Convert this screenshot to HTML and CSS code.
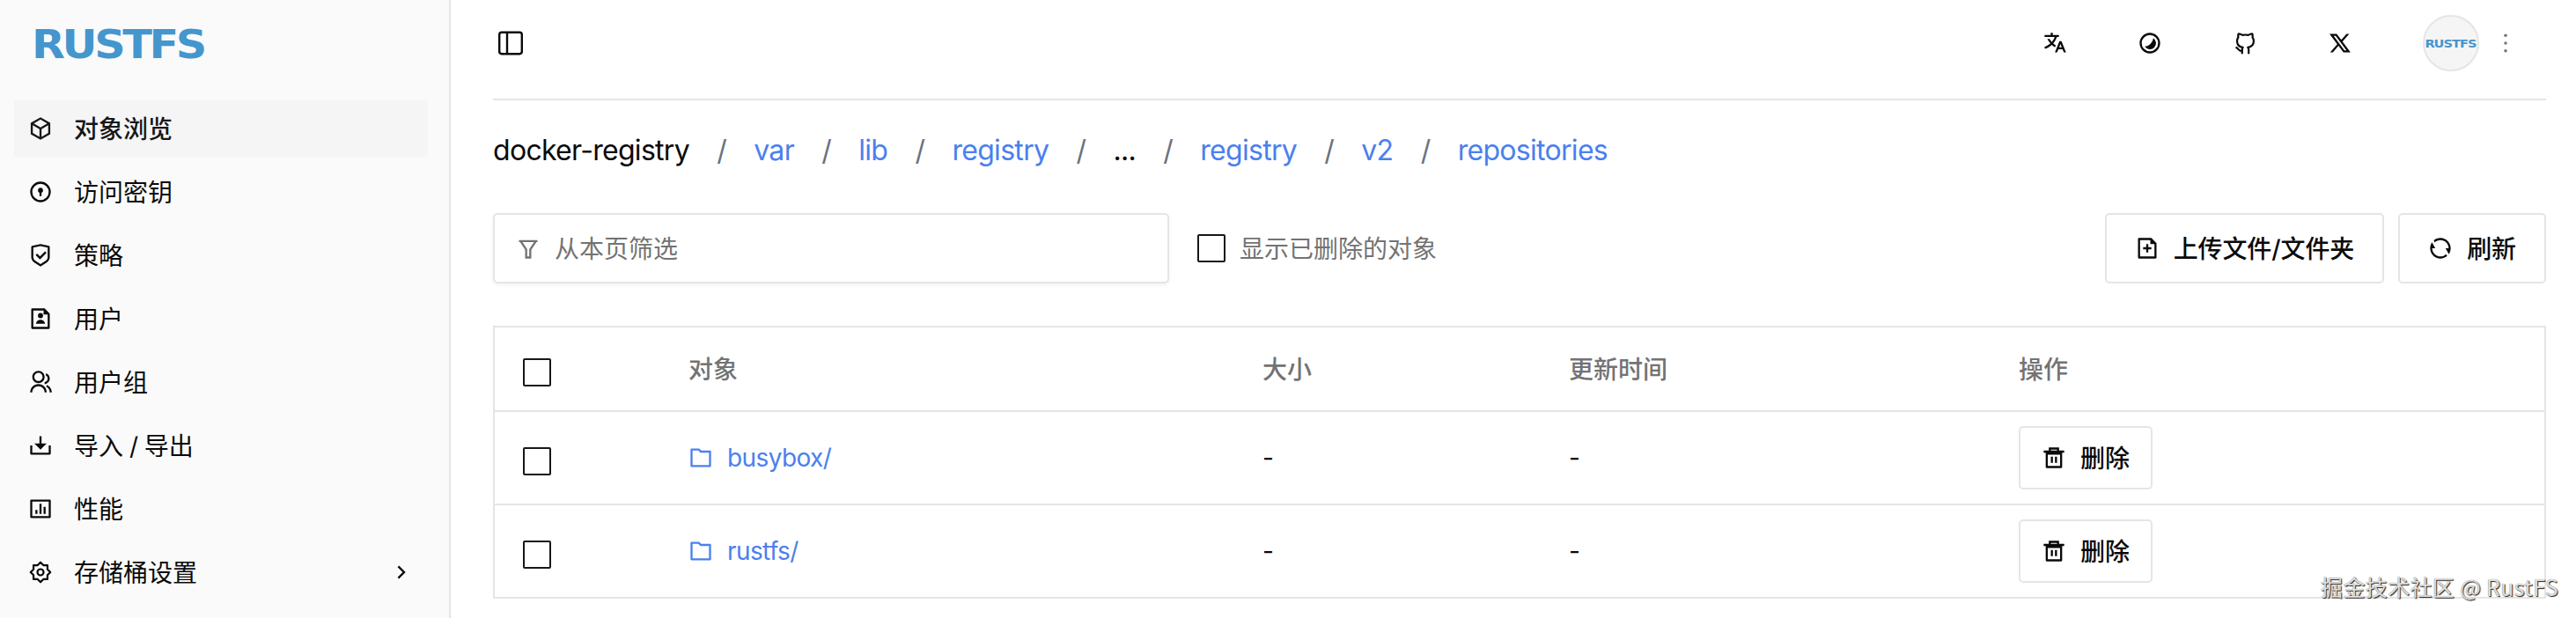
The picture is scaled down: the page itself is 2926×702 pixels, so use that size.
FILE: index.html
```html
<!DOCTYPE html>
<html lang="zh-CN">
<head>
<meta charset="utf-8">
<title>RustFS</title>
<link rel="stylesheet" href="styles.css">
</head>
<body>
<svg class="sprite" aria-hidden="true">
  <symbol id="box" viewBox="0 0 24 24"><path d="M12 1L21.5 6.5V17.5L12 23L2.5 17.5V6.5L12 1ZM5.494 7.078L12 10.844L18.506 7.078L12 3.311L5.494 7.078ZM4.5 8.813V16.347L11 20.11V12.577L4.5 8.813ZM13 20.11L19.5 16.347V8.813L13 12.577V20.11Z"/></symbol>
  <symbol id="lock" viewBox="0 0 24 24"><path d="M12 2a10 10 0 1 1 0 20a10 10 0 1 1 0-20ZM12 4a8 8 0 1 0 0 16a8 8 0 1 0 0-16ZM12 8a2.5 2.5 0 0 1 1 4.8V16H11V12.8A2.5 2.5 0 0 1 12 8Z"/></symbol>
  <symbol id="shield" viewBox="0 0 24 24"><path d="M3.783 2.826L12 1L20.217 2.826C20.674 2.928 21 3.333 21 3.802V13.789C21 15.795 19.997 17.668 18.328 18.781L12 23L5.672 18.781C4.002 17.668 3 15.795 3 13.789V3.802C3 3.333 3.326 2.928 3.783 2.826ZM5 4.604V13.789C5 15.126 5.668 16.375 6.781 17.117L12 20.597L17.219 17.117C18.332 16.375 19 15.126 19 13.789V4.604L12 3.049L5 4.604ZM16.452 8.222L17.866 9.636L11.503 16L7.26 11.757L8.674 10.343L11.502 13.171Z"/></symbol>
  <symbol id="user" viewBox="0 0 24 24"><path d="M15 4H5V20H19V8H15V4ZM3 2.992C3 2.444 3.447 2 3.999 2H16L21 7V20.993C21 21.549 20.555 22 20.007 22H3.993C3.445 22 3 21.545 3 21.008V2.992ZM12 11.5A2.5 2.5 0 1 1 12 6.5A2.5 2.5 0 1 1 12 11.5ZM7.527 17C7.776 14.75 9.684 13 12 13C14.316 13 16.224 14.75 16.473 17H7.527Z"/></symbol>
  <symbol id="group" viewBox="0 0 24 24"><path d="M2 22C2 17.582 5.582 14 10 14C14.418 14 18 17.582 18 22H16C16 18.686 13.314 16 10 16C6.686 16 4 18.686 4 22H2ZM10 13C6.685 13 4 10.315 4 7C4 3.685 6.685 1 10 1C13.315 1 16 3.685 16 7C16 10.315 13.315 13 10 13ZM10 11C12.21 11 14 9.21 14 7C14 4.79 12.21 3 10 3C7.79 3 6 4.79 6 7C6 9.21 7.79 11 10 11ZM18.284 14.703C21.064 15.956 23 18.752 23 22H21C21 19.564 19.548 17.467 17.463 16.527L18.284 14.703ZM17.596 3.413C19.594 4.237 21 6.204 21 8.5C21 11.37 18.804 13.725 16 13.978V11.965C17.697 11.722 19 10.264 19 8.5C19 7.119 18.202 5.926 17.041 5.356L17.596 3.413Z"/></symbol>
  <symbol id="transfer" viewBox="0 0 24 24"><path d="M13 10H18L12 16L6 10H11V3H13V10ZM4 19H20V12H22V20C22 20.552 21.552 21 21 21H3C2.448 21 2 20.552 2 20V12H4V19Z"/></symbol>
  <symbol id="chart" viewBox="0 0 24 24"><path d="M3 3H21C21.552 3 22 3.448 22 4V20C22 20.552 21.552 21 21 21H3C2.448 21 2 20.552 2 20V4C2 3.448 2.448 3 3 3ZM4 5V19H20V5H4ZM7 13H9V17H7V13ZM11 7H13V17H11V7ZM15 10H17V17H15V10Z"/></symbol>
  <symbol id="gear" viewBox="0 0 24 24"><g fill="none" stroke="currentColor" stroke-width="1.9" stroke-linejoin="round"><path d="M5.2 5.2H9.2L12 2.4L14.8 5.2H18.8V9.2L21.6 12L18.8 14.8V18.8H14.8L12 21.6L9.2 18.8H5.2V14.8L2.4 12L5.2 9.2Z"/><circle cx="12" cy="12" r="3"/></g></symbol>
  <symbol id="chevron" viewBox="0 0 24 24"><path d="M13.172 12L8.222 7.05L9.636 5.636L16 12L9.636 18.364L8.222 16.95Z"/></symbol>
  <symbol id="panel" viewBox="0 0 32 32"><g fill="none" stroke="currentColor" stroke-width="2.4"><rect x="3.2" y="3.8" width="25.6" height="24.4" rx="2.6"/><path d="M12 4V28"/></g></symbol>
  <symbol id="translate" viewBox="0 0 24 24"><path d="M18.5 10L22.9 21H20.745L19.544 18H15.454L14.255 21H12.101L16.5 10H18.5ZM10 2V4H16V6H14.032C13.243 8.366 11.995 10.504 10.414 12.301C11.198 13.004 12.047 13.62 12.953 14.136L12.202 16.014C11.063 15.391 9.999 14.626 9.03 13.739C7.144 15.464 4.906 16.77 2.446 17.564L1.911 15.635C4.061 14.931 6.023 13.788 7.673 12.285C6.46 10.895 5.445 9.319 4.687 8H6.963C7.551 9.044 8.245 9.996 9.001 10.855C10.258 9.425 11.256 7.776 11.912 6H2V4H8V2H10ZM17.5 12.885L16.253 16H18.745L17.5 12.885Z"/></symbol>
  <symbol id="contrast" viewBox="0 0 24 24"><path d="M12 22C6.477 22 2 17.523 2 12C2 6.477 6.477 2 12 2C17.523 2 22 6.477 22 12C22 17.523 17.523 22 12 22ZM12 20A8 8 0 1 0 12 4A8 8 0 1 0 12 20ZM7 15.316C11.284 14.787 14.787 11.284 15.316 7A6 6 0 1 1 7 15.316Z"/></symbol>
  <symbol id="github" viewBox="0 0 24 24"><g fill="none" stroke="currentColor" stroke-width="1.9" stroke-linejoin="round"><path d="M9.2 22.5V18.7C9.2 17.5 9.5 16.8 10 16.2C7 15.7 4.3 14.3 4.3 9.8C4.3 8.5 4.7 7.4 5.5 6.5C5.2 5.4 5.3 4.1 5.8 2.8C7 2.8 8.2 3.3 9.6 4.2C11.2 3.8 13.6 3.8 15.2 4.2C16.6 3.3 17.8 2.8 19 2.8C19.5 4.1 19.6 5.4 19.3 6.5C20.1 7.4 20.5 8.5 20.5 9.8C20.5 14.3 17.8 15.7 14.8 16.2C15.3 16.8 15.6 17.5 15.6 18.7V22.5"/><path d="M9.4 19.6C5.6 20.4 5.7 16.4 3 16.2"/></g></symbol>
  <symbol id="xlogo" viewBox="0 0 24 24"><path d="M10.488 14.651L15.25 21H22.25L14.392 10.522L20.93 3H18.28L13.163 8.884L8.75 3H1.75L9.262 13.015L2.32 21H4.97L10.488 14.651ZM16.25 19L5.75 5H7.75L18.25 19H16.25Z"/></symbol>
  <symbol id="more" viewBox="0 0 24 24"><circle cx="12" cy="4.5" r="1.5"/><circle cx="12" cy="12" r="1.5"/><circle cx="12" cy="19.5" r="1.5"/></symbol>
  <symbol id="filter" viewBox="0 0 24 24"><path d="M21 4V6H20L15 13.5V22H9V13.5L4 6H3V4H21ZM6.404 6L11 12.894V20H13V12.894L17.596 6H6.404Z"/></symbol>
  <symbol id="fileadd" viewBox="0 0 24 24"><path d="M15 4H5V20H19V8H15V4ZM3 2.992C3 2.444 3.447 2 3.999 2H16L21 7V20.993C21 21.549 20.555 22 20.007 22H3.993C3.445 22 3 21.545 3 21.008V2.992ZM11 11V8H13V11H16V13H13V16H11V13H8V11H11Z"/></symbol>
  <symbol id="refresh" viewBox="0 0 24 24"><path d="M5.463 4.433C7.278 2.86 9.547 2 12 2C17.523 2 22 6.477 22 12C22 14.136 21.33 16.116 20.19 17.741L17 12H20C20 7.582 16.418 4 12 4C9.85 4 7.898 4.848 6.46 6.228L5.463 4.433ZM18.537 19.567C16.722 21.14 14.453 22 12 22C6.477 22 2 17.523 2 12C2 9.864 2.67 7.884 3.81 6.259L7 12H4C4 16.418 7.582 20 12 20C14.15 20 16.102 19.152 17.54 17.772L18.537 19.567Z"/></symbol>
  <symbol id="folder" viewBox="0 0 24 24"><path d="M4 5V19H20V7H11.586L9.586 5H4ZM12.414 5H21C21.552 5 22 5.448 22 6V20C22 20.552 21.552 21 21 21H3C2.448 21 2 20.552 2 20V4C2 3.448 2.448 3 3 3H10.414L12.414 5Z"/></symbol>
  <symbol id="trash" viewBox="0 0 24 24"><path d="M20 7V21C20 21.552 19.552 22 19 22H5C4.448 22 4 21.552 4 21V7H2V5H22V7H20ZM6 9V20H18V9H6ZM7 2H17V5H15V4H9V5H7V2ZM9 11H11V17H9V11ZM13 11H15V17H13V11Z"/></symbol>
</svg>
<div class="app">
  <aside class="sidebar">
    <div class="logo"><svg class="wordmark" viewBox="38 32 196 36"><text x="36" y="66" textLength="196" lengthAdjust="spacingAndGlyphs">RUSTFS</text></svg></div>
    <nav class="menu">
      <a class="item active"><svg class="icon"><use href="#box"/></svg><span>对象浏览</span></a>
      <a class="item"><svg class="icon"><use href="#lock"/></svg><span>访问密钥</span></a>
      <a class="item"><svg class="icon"><use href="#shield"/></svg><span>策略</span></a>
      <a class="item"><svg class="icon"><use href="#user"/></svg><span>用户</span></a>
      <a class="item"><svg class="icon"><use href="#group"/></svg><span>用户组</span></a>
      <a class="item"><svg class="icon"><use href="#transfer"/></svg><span>导入 / 导出</span></a>
      <a class="item"><svg class="icon"><use href="#chart"/></svg><span>性能</span></a>
      <a class="item"><svg class="icon"><use href="#gear"/></svg><span class="grow">存储桶设置</span><svg class="icon arrow"><use href="#chevron"/></svg></a>
    </nav>
  </aside>
  <main class="main">
    <header class="topbar">
      <svg class="panel-icon"><use href="#panel"/></svg>
      <div class="tools">
        <svg class="icon"><use href="#translate"/></svg>
        <svg class="icon"><use href="#contrast"/></svg>
        <svg class="icon"><use href="#github"/></svg>
        <svg class="icon"><use href="#xlogo"/></svg>
      </div>
      <div class="account">
        <div class="avatar"><svg class="wordmark mini" viewBox="38 32 196 36"><text x="36" y="66" textLength="196" lengthAdjust="spacingAndGlyphs">RUSTFS</text></svg></div>
        <svg class="icon more"><use href="#more"/></svg>
      </div>
    </header>
    <nav class="crumbs">
      <span>docker-registry</span><i>/</i><a>var</a><i>/</i><a>lib</a><i>/</i><a>registry</a><i>/</i><span>...</span><i>/</i><a>registry</a><i>/</i><a>v2</a><i>/</i><a>repositories</a>
    </nav>
    <div class="toolbar">
      <div class="search"><svg class="icon"><use href="#filter"/></svg><span>从本页筛选</span></div>
      <label class="deleted"><span class="check"></span><span>显示已删除的对象</span></label>
      <div class="actions">
        <button class="btn"><svg class="icon"><use href="#fileadd"/></svg><span>上传文件/文件夹</span></button>
        <button class="btn"><svg class="icon"><use href="#refresh"/></svg><span>刷新</span></button>
      </div>
    </div>
    <div class="table">
      <div class="row head"><div><span class="check"></span></div><div>对象</div><div>大小</div><div>更新时间</div><div>操作</div></div>
      <div class="row"><div><span class="check"></span></div><div><a class="file"><svg class="icon"><use href="#folder"/></svg><span>busybox/</span></a></div><div>-</div><div>-</div><div><button class="btn delete"><svg class="icon"><use href="#trash"/></svg><span>删除</span></button></div></div>
      <div class="row"><div><span class="check"></span></div><div><a class="file"><svg class="icon"><use href="#folder"/></svg><span>rustfs/</span></a></div><div>-</div><div>-</div><div><button class="btn delete"><svg class="icon"><use href="#trash"/></svg><span>删除</span></button></div></div>
    </div>
  </main>
  <div class="watermark">掘金技术社区 @ RustFS</div>
</div>
</body>
</html>
```
FILE: styles.css
```css
* { box-sizing: border-box; }
body { margin: 0; background: #fff; color: #0a0a0a; font: 28px/40px Inter, "Noto Sans CJK SC", sans-serif; }
.sprite { position: absolute; width: 0; height: 0; }
.app { position: relative; display: flex; width: 2926px; height: 702px; overflow: hidden; }
.icon { flex: none; width: 28px; height: 28px; fill: currentColor; }
.sidebar { flex: none; width: 512px; background: #fafafa; border-right: 2px solid #e5e5e5; }
.logo { height: 114px; padding: 32px 0 0 38px; }
.wordmark { display: block; width: 196px; height: 36px; overflow: visible; fill: #4496cd; font: bold 44px "DejaVu Sans", sans-serif; letter-spacing: -3px; }
.wordmark.mini { width: 58px; height: 11px; }
.menu { display: flex; flex-direction: column; gap: 8px; padding: 0 24px 0 16px; }
.item { display: flex; align-items: center; gap: 24px; height: 64px; padding: 0 16px; word-spacing: -1px; }
.item span { padding-top: 1px; }
.item.active { background: #f5f5f5; font-weight: 500; color: #171717; }
.grow { flex: 1; }
.main { flex: none; width: 2332px; margin-left: 48px; }
.topbar { display: flex; align-items: center; height: 114px; padding-bottom: 14px; border-bottom: 2px solid #e5e5e5; }
.panel-icon { width: 32px; height: 32px; margin-left: 4px; }
.tools { display: flex; gap: 80px; margin-left: auto; }
.account { display: flex; align-items: center; gap: 16px; margin: 0 32px 0 80px; }
.avatar { display: flex; align-items: center; justify-content: center; width: 64px; height: 64px; border: 2px solid #e5e5e5; border-radius: 50%; background: #f5f5f5; }
.more { color: #737373; }
.crumbs { display: flex; height: 128px; padding-top: 33px; font-size: 32px; line-height: 48px; letter-spacing: -.7px; }
.crumbs i { margin: 0 31.2px; font-style: normal; color: #6b7280; }
.crumbs a, .file { color: #4a80ee; }
.toolbar { display: flex; align-items: center; height: 80px; }
.search { display: flex; align-items: center; gap: 16px; width: 768px; height: 80px; padding-left: 24px; border: 2px solid #e5e5e5; border-radius: 5px; box-shadow: 0 2px 4px rgba(0,0,0,.05); color: #737373; }
.search span, .deleted span + span { padding-top: 1px; }
.deleted { display: flex; align-items: center; gap: 16px; margin-left: 32px; color: #737373; }
.check { display: block; width: 32px; height: 32px; border: 2px solid #171717; border-radius: 2px; }
.actions { display: flex; gap: 16px; margin-left: auto; }
.btn { display: flex; align-items: center; gap: 16px; height: 80px; padding: 0 32px; border: 2px solid #e5e5e5; border-radius: 5px; background: #fff; color: #0a0a0a; font: inherit; font-weight: 500; }
.btn span { padding-top: 1px; letter-spacing: -.1px; }
.table { margin-top: 48px; border: 2px solid #e5e5e5; border-bottom: 0; }
.row { display: grid; grid-template-columns: 188px 652px 348px 511px 1fr; align-items: center; height: 106px; padding-left: 32px; border-bottom: 2px solid #e5e5e5; }
.head { height: 96px; color: #737373; font-weight: 500; }
.head div + div { padding-top: 1px; }
.row .check { margin-top: 7px; }
.file { display: flex; align-items: center; gap: 16px; letter-spacing: -.6px; }
.delete { height: 72px; padding: 0 24px; }
.watermark { position: absolute; right: 20px; bottom: 17px; font: 25px/38px "Noto Sans CJK SC", sans-serif; letter-spacing: .35px; color: #dedede; text-shadow: 1px 1px 1px #222, 0 0 1px #777; }
```
